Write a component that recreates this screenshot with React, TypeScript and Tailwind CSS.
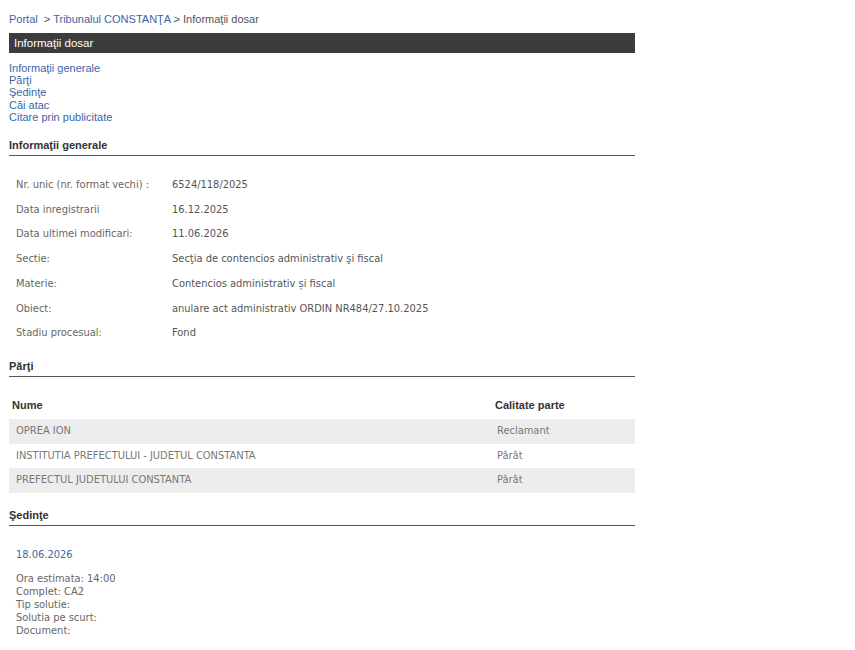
import React from 'react';

const info: [string, string][] = [
  ['Nr. unic (nr. format vechi) :', '6524/118/2025'],
  ['Data inregistrarii', '16.12.2025'],
  ['Data ultimei modificari:', '11.06.2026'],
  ['Sectie:', 'Secţia de contencios administrativ şi fiscal'],
  ['Materie:', 'Contencios administrativ și fiscal'],
  ['Obiect:', 'anulare act administrativ ORDIN NR484/27.10.2025'],
  ['Stadiu procesual:', 'Fond'],
];

const parti = [
  { nume: 'OPREA ION', calitate: 'Reclamant' },
  { nume: 'INSTITUTIA PREFECTULUI - JUDETUL CONSTANTA', calitate: 'Pârât' },
  { nume: 'PREFECTUL JUDETULUI CONSTANTA', calitate: 'Pârât' },
];

const arial = "font-['Liberation_Sans',Arial,sans-serif]";
const tahoma = "font-['DejaVu_Sans_Condensed','DejaVu_Sans',sans-serif]";

function SectionTitle({ children }: { children: React.ReactNode }) {
  return (
    <div className={`${arial} text-[11px] font-bold text-[#333] border-b border-[#555] pb-[3px] leading-[13px]`}>
      {children}
    </div>
  );
}

export default function App() {
  return (
    <div className="min-h-screen bg-white pt-[12px] pl-[9px]">
      <div className="w-[626px]">
        {/* Breadcrumb */}
        <div className={`${arial} text-[11px] leading-[14px] text-[#555]`}>
          <span className="text-[#3a66a6]">Portal</span>
          <span> &nbsp;&gt; </span>
          <span className="text-[#3a66a6]">Tribunalul CONSTANŢA</span>
          <span> &gt; Informaţii dosar</span>
        </div>

        {/* Title bar */}
        <div className={`${arial} mt-[7px] h-[20px] bg-[#3c3c3c] text-white text-[11.5px] leading-[20px] pl-[5px]`}>
          Informaţii dosar
        </div>

        {/* Anchor links */}
        <div className={`${arial} mt-[9px] flex flex-col text-[11px] leading-[12.2px] text-[#3a66a6]`}>
          <a>Informaţii generale</a>
          <a>Părţi</a>
          <a>Şedinţe</a>
          <a>Căi atac</a>
          <a>Citare prin publicitate</a>
        </div>

        {/* Informatii generale */}
        <div className="mt-[16px]">
          <SectionTitle>Informaţii generale</SectionTitle>
          <div className={`${tahoma} mt-[17px] text-[11px] text-[#555]`}>
            {info.map(([label, value]) => (
              <div key={label} className="flex h-[24.7px] items-center pl-[7px]">
                <div className="w-[156px] text-[#666]">{label}</div>
                <div>{value}</div>
              </div>
            ))}
          </div>
        </div>

        {/* Parti */}
        <div className="mt-[14px]">
          <SectionTitle>Părţi</SectionTitle>
          <div className="mt-[15px]">
            <div className={`${arial} flex h-[27px] items-center text-[11px] font-bold text-[#333] pl-[3px]`}>
              <div className="w-[483px]">Nume</div>
              <div>Calitate parte</div>
            </div>
            {parti.map((p, i) => (
              <div
                key={p.nume}
                className={`${tahoma} flex h-[24.7px] items-center text-[11px] text-[#777] pl-[7px] ${i % 2 === 0 ? 'bg-[#ededed]' : ''}`}
              >
                <div className="w-[481px]">{p.nume}</div>
                <div>{p.calitate}</div>
              </div>
            ))}
          </div>
        </div>

        {/* Sedinte */}
        <div className="mt-[16px]">
          <SectionTitle>Şedinţe</SectionTitle>
          <div className={`${tahoma} pl-[7px] text-[11px]`}>
            <div className="mt-[22px] text-[#3a66a6] leading-[14px]">18.06.2026</div>
            <div className="mt-[10px] text-[#666] leading-[13px]">
              <div>Ora estimata: 14:00</div>
              <div>Complet: CA2</div>
              <div>Tip solutie:</div>
              <div>Solutia pe scurt:</div>
              <div>Document:</div>
            </div>
          </div>
        </div>
      </div>
    </div>
  );
}
